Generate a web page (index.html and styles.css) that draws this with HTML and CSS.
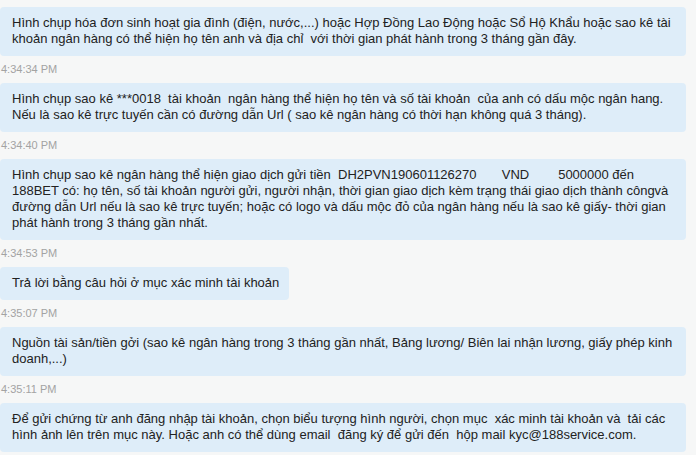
FILE: index.html
```html
<!DOCTYPE html>
<html>
<head>
<meta charset="utf-8">
<link rel="stylesheet" href="styles.css">
</head>
<body>
<div class="chat">
<div class="bubble">Hình chụp hóa đơn sinh hoạt gia đình (điện, nước,...) hoặc Hợp Đồng Lao Động hoặc Sổ Hộ Khẩu hoặc sao kê tài khoản ngân hàng có thể hiện họ tên anh và địa chỉ  với thời gian phát hành trong 3 tháng gần đây.</div>
<div class="time">4:34:34 PM</div>
<div class="bubble">Hình chụp sao kê ***0018  tài khoản  ngân hàng thể hiện họ tên và số tài khoản  của anh có dấu mộc ngân hang. Nếu là sao kê trực tuyến cần có đường dẫn Url ( sao kê ngân hàng có thời hạn không quá 3 tháng).</div>
<div class="time">4:34:40 PM</div>
<div class="bubble">Hình chụp sao kê ngân hàng thể hiện giao dịch gửi tiền  DH2PVN190601126270       VND        5000000 đến 188BET có: họ tên, số tài khoản người gửi, người nhận, thời gian giao dịch kèm trạng thái giao dịch thành côngvà đường dẫn Url nếu là sao kê trực tuyến; hoặc có logo và dấu mộc đỏ của ngân hàng nếu là sao kê giấy- thời gian phát hành trong 3 tháng gần nhất.</div>
<div class="time">4:34:53 PM</div>
<div class="bubble short">Trả lời bằng câu hỏi ở mục xác minh tài khoản</div>
<div class="time">4:35:07 PM</div>
<div class="bubble">Nguồn tài sản/tiền gởi (sao kê ngân hàng trong 3 tháng gần nhất, Bảng lương/ Biên lai nhận lương, giấy phép kinh doanh,...)</div>
<div class="time">4:35:11 PM</div>
<div class="bubble">Để gửi chứng từ anh đăng nhập tài khoản, chọn biểu tượng hình người, chọn mục  xác minh tài khoản và  tải các hình ảnh lên trên mục này. Hoặc anh có thể dùng email  đăng ký để gửi đến  hộp mail kyc@188service.com.</div>
</div>
</body>
</html>
```

FILE: styles.css
```css
html, body {
  margin: 0;
  padding: 0;
  background: #f6f7f7;
}
.chat {
  display: flex;
  flex-direction: column;
  align-items: flex-start;
  padding: 7px 10px 0 0;
  font-family: "Liberation Sans", Arial, sans-serif;
}
.bubble {
  box-sizing: border-box;
  width: 686px;
  background: #deedf9;
  border-radius: 4px;
  padding: 8px 10px 9px 12px;
  font-size: 13px;
  line-height: 16px;
  color: #222;
  white-space: pre-wrap;
}
.bubble.short {
  width: auto;
  padding-right: 10px;
}
.time {
  font-size: 11px;
  line-height: 13px;
  color: #a3a3a3;
  margin: 7px 0 7px 1px;
}
```
